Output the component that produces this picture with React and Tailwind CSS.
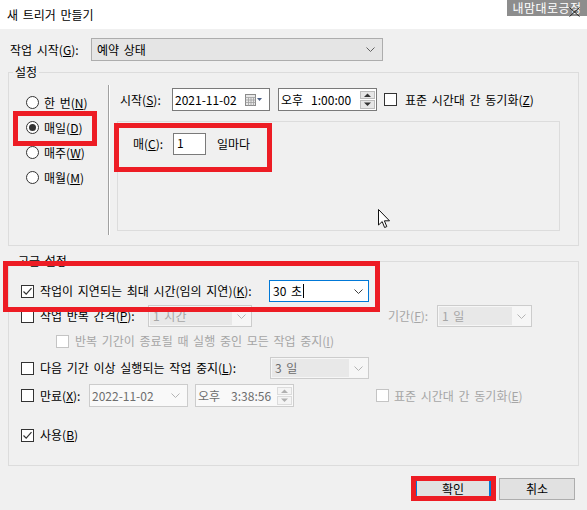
import React from "react";

const Acc = ({ k }) => (
  <>
    (<span className="underline underline-offset-[1px]">{k}</span>)
  </>
);

const Chevron = ({ color = "#606060" }) => (
  <svg width="9" height="5" viewBox="0 0 9 5">
    <path d="M0.5 0.5 L4.5 4.5 L8.5 0.5" fill="none" stroke={color} strokeWidth="1" />
  </svg>
);

const Check = ({ checked, disabled }) => (
  <span
    className={
      disabled
        ? "block w-[13px] h-[13px] shrink-0 border border-[#c4c4c4] bg-white"
        : "w-[13px] h-[13px] shrink-0 border border-[#333333] bg-white flex items-center justify-center"
    }
  >
    {checked && (
      <svg width="11" height="11" viewBox="0 0 11 11">
        <path d="M1.5 5.5 L4.2 8.2 L9.5 2.2" fill="none" stroke="#333333" strokeWidth="1.2" />
      </svg>
    )}
  </span>
);

const Radio = ({ checked, children }) => (
  <div className="h-[25px] flex items-center pl-[17px] gap-[5px]">
    <span className="w-[13px] h-[13px] rounded-full border border-[#333333] bg-white flex items-center justify-center">
      {checked && <span className="w-[7px] h-[7px] rounded-full bg-[#333333]" />}
    </span>
    <span>{children}</span>
  </div>
);

const Spinner = ({ disabled }) => (
  <div className="flex flex-col gap-px h-[18px] w-[15px]">
    {["M0 4 L3.5 0.5 L7 4", "M0 0.5 L3.5 4 L7 0.5"].map((d, i) => (
      <span
        key={i}
        className={
          disabled
            ? "flex-1 flex items-center justify-center border border-[#dcdcdc] bg-[#f4f4f4]"
            : "flex-1 flex items-center justify-center border border-[#bcbcbc] bg-[#e6e6e6]"
        }
      >
        <svg width="7" height="4.5" viewBox="0 0 7 4.5">
          <path d={d} fill={disabled ? "#b0b0b0" : "#333333"} />
        </svg>
      </span>
    ))}
  </div>
);

const DisabledCombo = ({ w, text, dark }) => (
  <div className={`${w} h-[22px] border border-[#cccccc] bg-[#f6f6f6] flex items-center p-px`}>
    <span
      className={
        dark
          ? "flex-1 h-full bg-[#e8e8e8] flex items-center pl-[3px] text-[#6d6d6d]"
          : "flex-1 h-full bg-[#e8e8e8] flex items-center pl-[3px] text-[#a6a6a6]"
      }
    >
      {text}
    </span>
    <span className="w-[18px] flex justify-center">
      <Chevron color="#b4b4b4" />
    </span>
  </div>
);

export default function App() {
  return (
    <div className="relative w-[587px] h-[510px] overflow-hidden bg-[#f0f0f0] text-[12px] leading-[14px] [word-spacing:2px] text-black font-['Noto_Sans_CJK_KR',sans-serif]">
      {/* title bar */}
      <div className="h-[29px] bg-white flex items-center pl-[7px]">새 트리거 만들기</div>

      {/* 작업 시작 */}
      <div className="mt-[9px] h-[23px] flex items-center pl-[10px]">
        <span className="w-[81px]">
          작업 시작<Acc k="G" />:
        </span>
        <div className="w-[292px] h-[23px] border border-[#adadad] bg-[#e5e5e5] flex items-center pl-[5px] pr-[7px]">
          <span className="flex-1">예약 상태</span>
          <Chevron />
        </div>
      </div>

      {/* 설정 */}
      <fieldset className="mx-[8px] mt-[4px] border border-[#dcdcdc]">
        <legend className="ml-[4px] px-[2px] leading-[14px]">설정</legend>
        <div className="flex">
          <div className="w-[99px] pt-[11px]">
            <Radio>
              한 번<Acc k="N" />
            </Radio>
            <Radio checked>
              매일<Acc k="D" />
            </Radio>
            <Radio>
              매주<Acc k="W" />
            </Radio>
            <Radio>
              매월<Acc k="M" />
            </Radio>
          </div>
          <div className="mt-[6px] h-[150px] w-[2px] border-l border-[#a0a0a0] bg-white" />
          <div className="flex-1 pl-[7px] pt-[9px] pb-[14px]">
            <div className="h-[23px] flex items-center pl-[3px]">
              <span className="w-[52px]">
                시작<Acc k="S" />:
              </span>
              <div className="w-[98px] h-[23px] border border-[#7a7a7a] bg-white flex items-center pl-[2px] pr-[6px]">
                <span className="flex-1">2021-11-02</span>
                <svg width="18" height="12" viewBox="0 0 18 12">
                  <rect x="0.5" y="0.5" width="10" height="11" fill="#e8e8e8" stroke="#8a8a8a" />
                  <path d="M0.5 3.5 H10.5 M0.5 6 H10.5 M0.5 8.5 H10.5 M3.5 3.5 V11.5 M6 3.5 V11.5 M8.5 3.5 V11.5" stroke="#a0a0a0" strokeWidth="0.8" />
                  <path d="M12 4 L17 4 L14.5 7 Z" fill="#4a5f86" />
                </svg>
              </div>
              <div className="ml-[8px] w-[99px] h-[23px] border border-[#7a7a7a] bg-white flex items-center pl-[2px] pr-[1px]">
                <span className="flex-1">
                  오후<span className="ml-[8px]">1:00:00</span>
                </span>
                <Spinner />
              </div>
              <span className="ml-[7px]">
                <Check />
              </span>
              <span className="ml-[8px]">
                표준 시간대 간 동기화<Acc k="Z" />
              </span>
            </div>
            <div className="mt-[10px] w-[443px] h-[110px] border border-[#dcdcdc] pt-[11px]">
              <div className="h-[22px] flex items-center pl-[15px]">
                <span className="w-[40px]">
                  매<Acc k="C" />:
                </span>
                <div className="w-[33px] h-[22px] border border-[#7a7a7a] bg-white pl-[3px] pt-[2px]">1</div>
                <span className="ml-[11px]">일마다</span>
              </div>
            </div>
          </div>
        </div>
      </fieldset>

      {/* 고급 설정 */}
      <fieldset className="mx-[8px] mt-[8px] border border-[#dcdcdc] pb-[19px]">
        <legend className="ml-[7px] px-[2px] leading-[14px]">고급 설정</legend>

        <div className="mt-[12px] h-[22px] flex items-center pl-[12px]">
          <Check checked />
          <span className="ml-[6px] w-[229px]">
            작업이 지연되는 최대 시간(임의 지연)<Acc k="K" />:
          </span>
          <div className="w-[100px] h-[22px] border border-[#0078d7] bg-white flex items-center pl-[3px] pr-[5px]">
            <span className="flex-1 flex items-center">
              30 초<span className="ml-px w-px h-[14px] bg-black" />
            </span>
            <Chevron color="#404040" />
          </div>
        </div>

        <div className="mt-[3px] h-[22px] flex items-center pl-[12px]">
          <Check />
          <span className="ml-[6px] w-[108px]">
            작업 반복 간격<Acc k="P" />:
          </span>
          <DisabledCombo w="w-[104px]" text="1 시간" />
          <span className="ml-[136px] w-[49px] text-[#a6a6a6]">
            기간<Acc k="F" />:
          </span>
          <DisabledCombo w="w-[95px]" text="1 일" />
        </div>

        <div className="mt-[3px] h-[22px] flex items-center pl-[47px]">
          <Check disabled />
          <span className="ml-[6px] text-[#a6a6a6]">
            반복 기간이 종료될 때 실행 중인 모든 작업 중지<Acc k="I" />
          </span>
        </div>

        <div className="mt-[5px] h-[22px] flex items-center pl-[12px]">
          <Check />
          <span className="ml-[6px] w-[230px]">
            다음 기간 이상 실행되는 작업 중지<Acc k="L" />:
          </span>
          <DisabledCombo w="w-[99px]" text="3 일" dark />
        </div>

        <div className="mt-[5px] h-[23px] flex items-center pl-[12px]">
          <Check />
          <span className="ml-[6px] w-[49px]">
            만료<Acc k="X" />:
          </span>
          <div className="w-[99px] h-[23px] border border-[#cccccc] bg-[#f9f9f9] flex items-center pl-[2px] pr-[7px] text-[#6d6d6d]">
            <span className="flex-1">2022-11-02</span>
            <Chevron color="#b4b4b4" />
          </div>
          <div className="ml-[7px] w-[99px] h-[23px] border border-[#cccccc] bg-[#f9f9f9] flex items-center pl-[2px] pr-[1px] text-[#6d6d6d]">
            <span className="flex-1">
              오후<span className="ml-[11px]">3:38:56</span>
            </span>
            <Spinner disabled />
          </div>
          <span className="ml-[82px]">
            <Check disabled />
          </span>
          <span className="ml-[5px] text-[#a6a6a6]">
            표준 시간대 간 동기화<Acc k="E" />
          </span>
        </div>

        <div className="mt-[17px] h-[22px] flex items-center pl-[12px]">
          <Check checked />
          <span className="ml-[6px]">
            사용<Acc k="B" />
          </span>
        </div>
      </fieldset>

      {/* buttons */}
      <div className="mt-[12px] flex justify-end gap-[8px] pr-[12px]">
        <button className="w-[76px] h-[22px] border-2 border-[#0078d7] bg-[#e1e1e1] flex items-center justify-center">
          확인
        </button>
        <button className="w-[76px] h-[22px] border border-[#adadad] bg-[#e1e1e1] flex items-center justify-center">
          취소
        </button>
      </div>

      {/* watermark over close button */}
      <div className="absolute right-0 top-0 w-[80px] h-[16px] bg-[#8d8d8d] text-white text-[12px] leading-[16px] tracking-[0.5px] [word-spacing:0px] whitespace-nowrap text-center">
        내맘대로긍정
      </div>
      <svg className="absolute left-[569px] top-[7px]" width="11" height="10" viewBox="0 0 11 10">
        <path d="M0.5 0.5 L10.5 9.5 M10.5 0.5 L0.5 9.5" stroke="#222222" strokeWidth="1" />
      </svg>

      {/* mouse pointer */}
      <svg className="absolute left-[378px] top-[209px]" width="13" height="20" viewBox="0 0 13 20">
        <path d="M0.5 0.5 L0.5 16 L4.2 12.6 L6.6 18.5 L8.8 17.6 L6.4 11.8 L11.5 11.8 Z" fill="white" stroke="#111111" strokeWidth="1" />
      </svg>

      {/* red highlight boxes */}
      <div className="absolute left-[13px] top-[111px] w-[84px] h-[35px] border-[5px] border-[#ed1c24]" />
      <div className="absolute left-[114px] top-[123px] w-[158px] h-[49px] border-[5px] border-[#ed1c24]" />
      <div className="absolute left-[3px] top-[261px] w-[377px] h-[51px] border-[5px] border-[#ed1c24]" />
      <div className="absolute left-[411px] top-[476px] w-[85px] h-[25px] border-[5px] border-[#ed1c24]" />
    </div>
  );
}
